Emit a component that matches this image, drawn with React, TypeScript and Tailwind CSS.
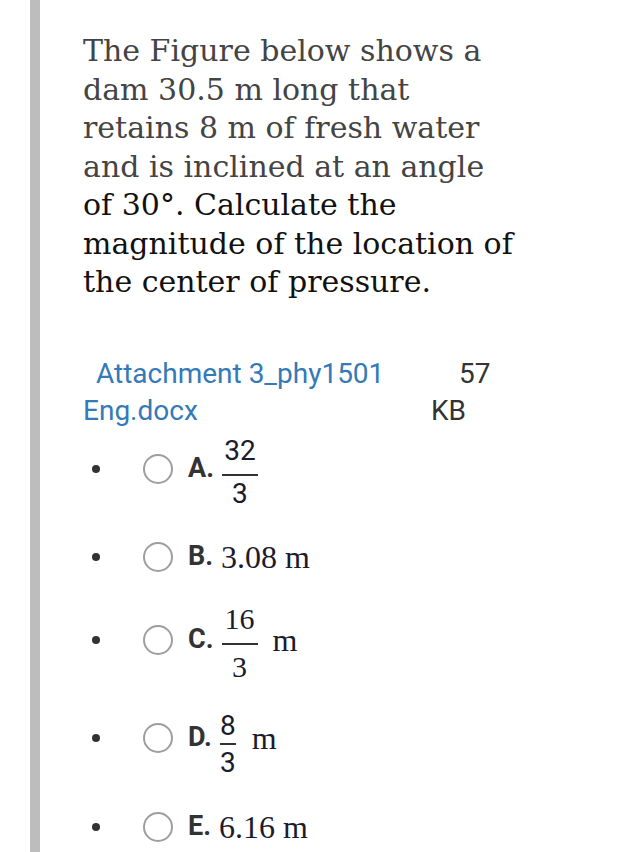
import React from "react";

const serif = { fontFamily: '"DejaVu Serif", serif' };

function Radio() {
  return <div className="w-[30px] h-[30px] rounded-full border-2 border-[#9e9e9e] shrink-0" />;
}

function Bullet() {
  return <div className="w-[8px] h-[8px] rounded-full bg-[#333] shrink-0" />;
}

function Frac({
  num,
  den,
  w,
  top,
  bot,
  pt,
  font,
}: {
  num: string;
  den: string;
  w: string;
  top: string;
  bot: string;
  pt: string;
  font: string;
}) {
  return (
    <div className={`flex flex-col items-center leading-[30px] text-[#1b1b2b] ${font} ${pt}`}>
      <span>{num}</span>
      <div className={`h-[2px] bg-[#333] ${top} ${bot} ${w}`} />
      <span>{den}</span>
    </div>
  );
}

function Row({ mt, label, children }: { mt: string; label: string; children: React.ReactNode }) {
  return (
    <div className={`flex items-center h-[80px] ${mt}`}>
      <div className="w-[60px] flex justify-start pl-[9px]">
        <Bullet />
      </div>
      <Radio />
      <span className="ml-[15px] font-['Roboto',sans-serif] font-bold text-[27px] text-[#333]">{label}</span>
      <div className="ml-[8px] flex items-center">{children}</div>
    </div>
  );
}

const mathText = "font-['Liberation_Serif',serif] text-[32px] text-[#1b1b2b]";

export default function App() {
  return (
    <div className="w-[622px] h-[852px] bg-white flex overflow-hidden">
      <div className="w-[30px] shrink-0" />
      <div className="w-[10px] h-full bg-[#bdbdbd] shrink-0" />
      <div className="flex-1 pl-[43px]">
        <p className="text-[30px] leading-[38.5px] pt-[32px] text-[#444]" style={serif}>
          The Figure below shows a<br />
          dam 30.5 m long that<br />
          retains 8 m of fresh water<br />
          and is inclined at an angle<br />
          <span className="text-[#111]">
            of 30°. Calculate the<br />
            magnitude of the location of<br />
            the center of pressure.
          </span>
        </p>

        <div className="mt-[53px] flex font-['Roboto',sans-serif] text-[28px] leading-[37px]">
          <div className="w-[348px] text-[#337ab7]">
            <div className="pl-[13px]">Attachment 3_phy1501</div>
            <div>Eng.docx</div>
          </div>
          <div className="text-[#333]">
            <div className="pl-[28px]">57</div>
            <div>KB</div>
          </div>
        </div>

        <div>
          <Row mt="mt-0" label="A.">
            <Frac
              num="32"
              den="3"
              w="w-[36px]"
              top="mt-[8px]"
              bot="mb-[3px]"
              pt="pt-[7px]"
              font="font-['Roboto',sans-serif] text-[28px]"
            />
          </Row>
          <Row mt="mt-[8px]" label="B.">
            <span className={mathText}>3.08 m</span>
          </Row>
          <Row mt="mt-[3px]" label="C.">
            <Frac
              num="16"
              den="3"
              w="w-[36px]"
              top="mt-[9px]"
              bot="mb-[7px]"
              pt="pt-[6px]"
              font="font-['Liberation_Serif',serif] text-[30px]"
            />
            <span className={`ml-[15px] ${mathText}`}>m</span>
          </Row>
          <Row mt="mt-[18px]" label="D.">
            <Frac
              num="8"
              den="3"
              w="w-[16px]"
              top="mt-[2px]"
              bot="mb-[3px]"
              pt="pt-[13px]"
              font="font-['Roboto',sans-serif] text-[28px]"
            />
            <span className={`ml-[16px] ${mathText}`}>m</span>
          </Row>
          <Row mt="mt-[9px]" label="E.">
            <span className={mathText}>6.16 m</span>
          </Row>
        </div>
      </div>
    </div>
  );
}
